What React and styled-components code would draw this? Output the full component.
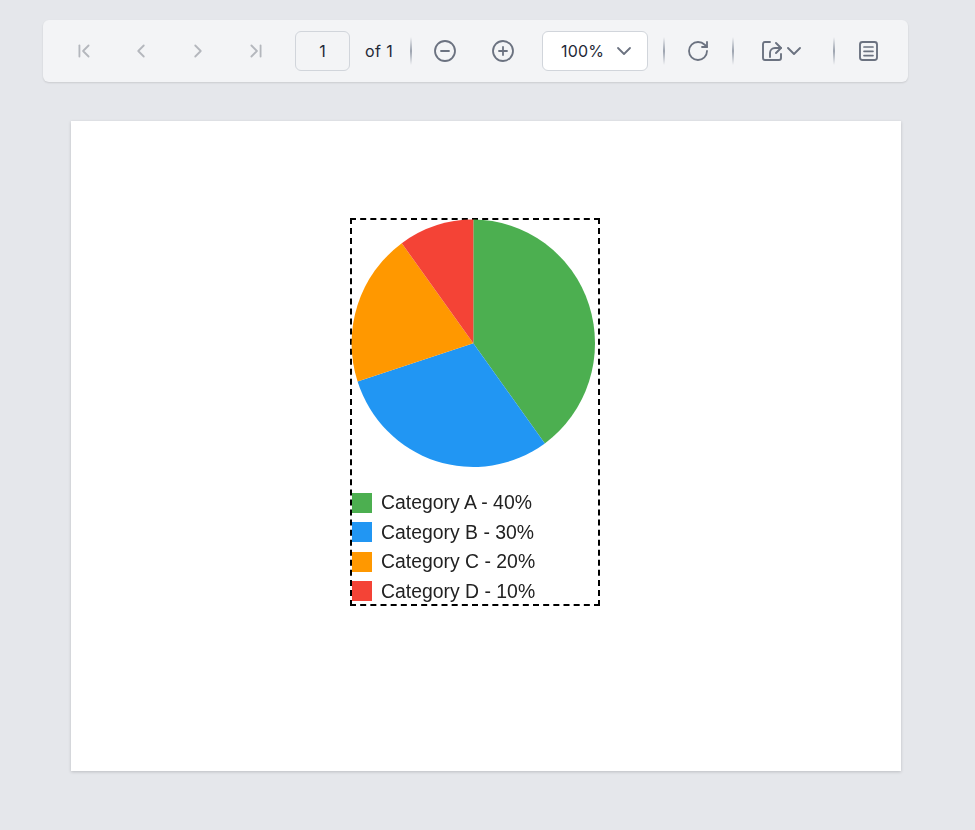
import React from 'react';
import styled, { createGlobalStyle } from 'styled-components';
import {
  ChevronDown,
  ChevronFirst,
  ChevronLast,
  ChevronLeft,
  ChevronRight,
  CircleMinus,
  CirclePlus,
  RotateCw,
} from 'lucide-react';

const GlobalStyle = createGlobalStyle`
  html, body {
    margin: 0;
    padding: 0;
    background: #e5e7eb;
    font-family: Inter, "Liberation Sans", sans-serif;
  }
`;

const Viewer = styled.main`
  width: 975px;
  height: 830px;
  padding-top: 20px;
  box-sizing: border-box;
  background: #e5e7eb;
  overflow: hidden;
`;

const Toolbar = styled.div`
  width: 865px;
  height: 62px;
  margin-left: 43px;
  padding-left: 21px;
  box-sizing: border-box;
  display: flex;
  align-items: center;
  background: #f3f4f6;
  border-radius: 6px;
  box-shadow: 0 1px 2px rgba(0, 0, 0, 0.12);
`;

const IconButton = styled.button`
  width: ${(p) => p.$width || 40}px;
  height: 40px;
  margin-left: ${(p) => p.$left || 0}px;
  padding: 0 0 1px;
  flex: none;
  display: flex;
  align-items: center;
  justify-content: center;
  background: none;
  border: 0;
  color: ${(p) => (p.disabled ? '#b4b7bd' : '#6b7280')};
`;

const PageInput = styled.input`
  width: 55px;
  height: 40px;
  margin-left: 19px;
  padding: 0;
  box-sizing: border-box;
  flex: none;
  text-align: center;
  font: 16px Inter, sans-serif;
  color: #1f2937;
  background: #f3f4f6;
  border: 1px solid #d1d5db;
  border-radius: 6px;
`;

const PageCount = styled.span`
  margin-left: 15px;
  width: 29px;
  flex: none;
  font-size: 16px;
  letter-spacing: 0.4px;
  color: #1f2937;
  white-space: nowrap;
`;

const Divider = styled.span`
  width: 2px;
  height: 28px;
  margin-left: ${(p) => p.$left}px;
  flex: none;
  background: linear-gradient(to bottom, #f3f4f6, #9ca3af 50%, #f3f4f6);
`;

const ZoomSelect = styled.div`
  width: 106px;
  height: 40px;
  margin-left: 19px;
  padding: 0 11px 1px 18px;
  box-sizing: border-box;
  flex: none;
  display: flex;
  align-items: center;
  justify-content: space-between;
  font-size: 16px;
  letter-spacing: 0.2px;
  color: #1f2937;
  background: #fff;
  border: 1px solid #d1d5db;
  border-radius: 6px;
  svg {
    color: #6b7280;
  }
`;

const Sheet = styled.section`
  width: 830px;
  height: 650px;
  margin: 39px 0 0 71px;
  padding: 97px 0 0 279px;
  box-sizing: border-box;
  background: #fff;
  box-shadow: 0 1px 3px rgba(0, 0, 0, 0.18);
`;

const Figure = styled.figure`
  width: 250px;
  height: 388px;
  margin: 0;
  box-sizing: border-box;
  border: 2px dashed #000;
  display: flex;
  flex-direction: column;
`;

const Pie = styled.svg`
  display: block;
  width: 246px;
  height: 250px;
  flex: none;
  overflow: visible;
  filter: blur(0.4px);
`;

const Legend = styled.ul`
  list-style: none;
  margin: 22.5px 0 0;
  padding: 0;
  display: flex;
  flex-direction: column;
  gap: 9.6px;
`;

const LegendRow = styled.li`
  height: 20px;
  display: flex;
  align-items: center;
  gap: 9px;
  font: 19.4px "Liberation Sans", Arial, sans-serif;
  color: #222;
  white-space: nowrap;
  filter: blur(0.35px);
`;

const Swatch = styled.span`
  width: 20px;
  height: 20px;
  flex: none;
  background: ${(p) => p.$color};
`;

const slices = [
  { name: 'Category A', value: 40, color: '#4caf50' },
  { name: 'Category B', value: 30, color: '#2196f3' },
  { name: 'Category C', value: 20, color: '#ff9800' },
  { name: 'Category D', value: 10, color: '#f44336' },
];

// the chart is a stretched bitmap in the original, so the pie is very slightly taller than wide
const slicePath = (from, to, cx, cy, rx, ry) => {
  const point = (pct) => {
    const a = (pct / 100) * 2 * Math.PI;
    return `${(cx + rx * Math.sin(a)).toFixed(2)} ${(cy - ry * Math.cos(a)).toFixed(2)}`;
  };
  const large = to - from > 50 ? 1 : 0;
  return `M${cx} ${cy}L${point(from)}A${rx} ${ry} 0 ${large} 1 ${point(to)}Z`;
};

const PieChart = () => {
  let total = 0;
  return (
    <Pie viewBox="0 0 246 250">
      {slices.map((s) => {
        const from = total;
        total += s.value;
        return <path key={s.name} d={slicePath(from, total, 121.3, 123.3, 121.7, 123.7)} fill={s.color} />;
      })}
    </Pie>
  );
};

const ShareIcon = () => (
  <svg width="22" height="24" viewBox="0 0 22 24" fill="none" stroke="currentColor" strokeWidth="1.9" strokeLinecap="round" strokeLinejoin="round">
    <path d="M10 3H5a2 2 0 0 0-2 2v14a2 2 0 0 0 2 2h14a2 2 0 0 0 2-2v-4" />
    <path d="M16 4l5 5-5 5" />
    <path d="M10 18v-4a5 5 0 0 1 5-5h6" />
  </svg>
);

const NotesIcon = () => (
  <svg width="22" height="24" viewBox="0 0 22 24" fill="none" stroke="currentColor" strokeWidth="1.9" strokeLinecap="round" strokeLinejoin="round">
    <rect x="2" y="3" width="17" height="18" rx="2.5" />
    <path d="M6 8h9M6 12.3h9M6 16.6h9" strokeWidth="1.7" />
  </svg>
);

const App = () => (
  <>
    <GlobalStyle />
    <Viewer>
      <Toolbar>
        <IconButton disabled><ChevronFirst size={22} strokeWidth={2} /></IconButton>
        <IconButton disabled $left={17}><ChevronLeft size={22} strokeWidth={2} /></IconButton>
        <IconButton disabled $left={17}><ChevronRight size={22} strokeWidth={2} /></IconButton>
        <IconButton disabled $left={18}><ChevronLast size={22} strokeWidth={2} /></IconButton>
        <PageInput defaultValue="1" />
        <PageCount>of 1</PageCount>
        <Divider $left={16} />
        <IconButton $left={13}><CircleMinus size={24} strokeWidth={1.8} /></IconButton>
        <IconButton $left={18}><CirclePlus size={24} strokeWidth={1.8} /></IconButton>
        <ZoomSelect>
          100%
          <ChevronDown size={24} strokeWidth={1.8} />
        </ZoomSelect>
        <Divider $left={15} />
        <IconButton $left={13}><RotateCw size={24} strokeWidth={1.8} /></IconButton>
        <Divider $left={14} />
        <IconButton $width={46} $left={26}>
          <ShareIcon />
          <ChevronDown size={24} strokeWidth={1.9} />
        </IconButton>
        <Divider $left={27} />
        <IconButton $left={14}><NotesIcon /></IconButton>
      </Toolbar>
      <Sheet>
        <Figure>
          <PieChart />
          <Legend>
            {slices.map((s) => (
              <LegendRow key={s.name}>
                <Swatch $color={s.color} />
                {s.name} - {s.value}%
              </LegendRow>
            ))}
          </Legend>
        </Figure>
      </Sheet>
    </Viewer>
  </>
);

export default App;
